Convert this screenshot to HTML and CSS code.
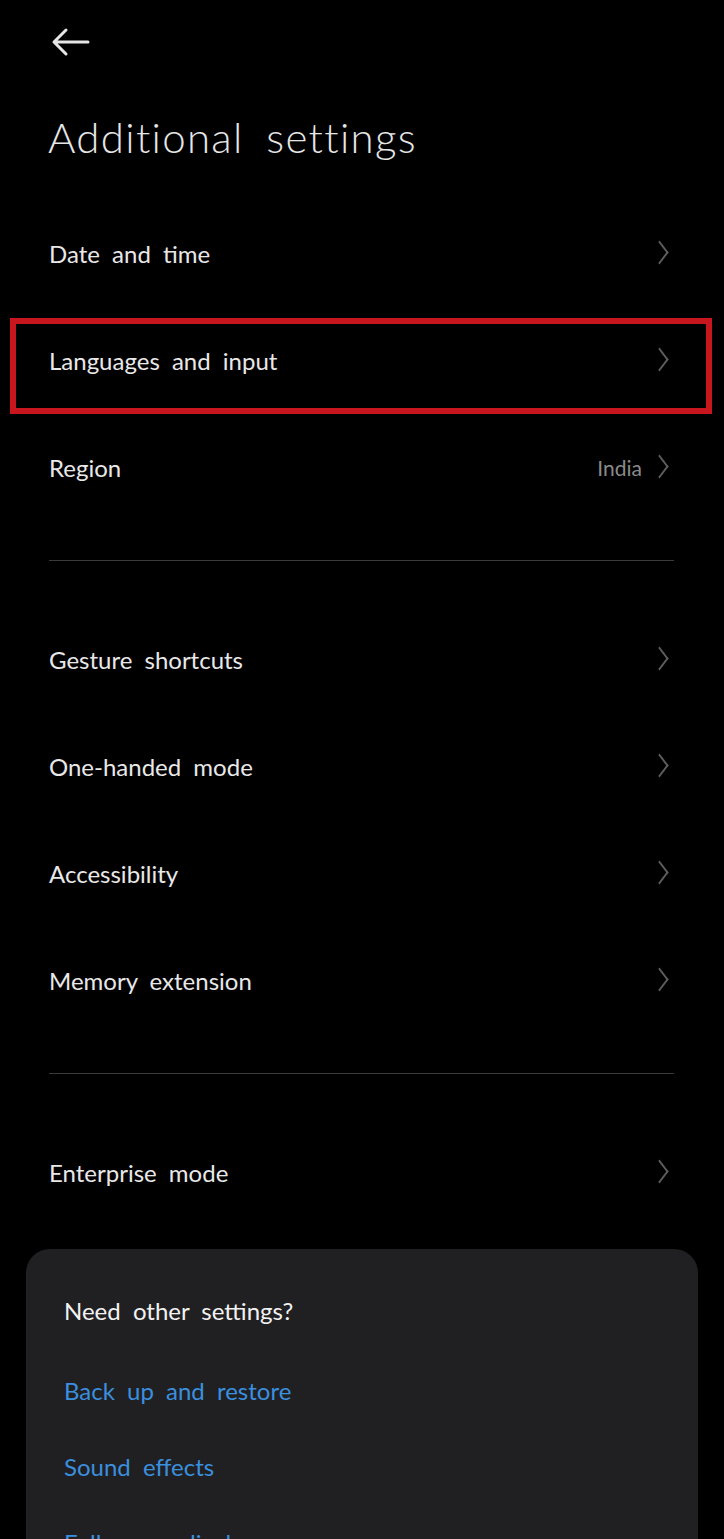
FILE: index.html
```html
<!DOCTYPE html>
<html>

<head>
    <meta name="viewport" content="width=device-width, initial-scale=1">
    <meta charset="utf-8">
    <link rel="stylesheet" href="styles.css">
</head>

<body>

    <div class="top">
        <svg class="back" width="40" height="30" viewBox="0 0 40 30">
            <path d="M38 15H4M16 3L4 15l12 12" fill="none" stroke="#e6e6e6" stroke-width="3" stroke-linecap="round" stroke-linejoin="round"/>
        </svg>
    </div>

    <h1 class="title">Additional settings</h1>

    <div class="list">
        <div class="row">
            <span class="label">Date and time</span>
            <span class="chev"></span>
        </div>
        <div class="row marked">
            <span class="label">Languages and input</span>
            <span class="chev"></span>
        </div>
        <div class="row">
            <span class="label">Region</span>
            <span class="value">India</span>
            <span class="chev"></span>
        </div>

        <div class="divider"></div>

        <div class="row">
            <span class="label">Gesture shortcuts</span>
            <span class="chev"></span>
        </div>
        <div class="row">
            <span class="label">One-handed mode</span>
            <span class="chev"></span>
        </div>
        <div class="row">
            <span class="label">Accessibility</span>
            <span class="chev"></span>
        </div>
        <div class="row">
            <span class="label">Memory extension</span>
            <span class="chev"></span>
        </div>

        <div class="divider"></div>

        <div class="row">
            <span class="label">Enterprise mode</span>
            <span class="chev"></span>
        </div>
    </div>

    <div class="card">
        <div class="card-head">Need other settings?</div>
        <a class="link" href="#">Back up and restore</a>
        <a class="link" href="#">Sound effects</a>
        <a class="link" href="#">Fullscreen display</a>
    </div>

</body>

</html>
```

FILE: styles.css
```css
* {
    box-sizing: border-box;
}

body {
    margin: 0;
    background: #000;
    color: #e8e8e8;
    font-family: Lato, "Liberation Sans", sans-serif;
    font-weight: 400;
    overflow: hidden;
}

.top {
    padding: 27px 0 0 50px;
    height: 58px;
}

.back {
    display: block;
}

.title {
    margin: 54px 0 0 48px;
    font-size: 42px;
    line-height: 50px;
    font-weight: 300;
    word-spacing: 10px;
    letter-spacing: 1.3px;
    color: #e6e6e6;
}

.list {
    margin-top: 38px;
}

.row {
    position: relative;
    display: flex;
    align-items: center;
    height: 107px;
    padding: 0 52px 0 49px;
    font-size: 24px;
    word-spacing: 6px;
}

.label {
    flex: 1;
}

.value {
    color: #8a8a8a;
    font-size: 21px;
    margin-right: 16px;
}

.chev {
    width: 14px;
    height: 26px;
    position: relative;
}

.chev::before {
    content: "";
    position: absolute;
    top: 4px;
    right: 5px;
    width: 13px;
    height: 13px;
    border-top: 2px solid #5e5e5e;
    border-right: 2px solid #5e5e5e;
    transform: rotate(45deg) skew(8deg, 8deg);
}

.marked::after {
    content: "";
    position: absolute;
    top: 11px;
    bottom: 0;
    left: 10px;
    right: 12px;
    border: 6px solid #c8161f;
}

.divider {
    height: 1px;
    background: #3a3a3a;
    margin: 39px 50px 45px 49px;
}

.card {
    margin: 23px 26px 0;
    padding-top: 24px;
    background: #202022;
    border-radius: 24px 24px 0 0;
    height: 400px;
}

.card-head {
    padding-left: 38px;
    font-size: 24px;
    line-height: 76px;
    word-spacing: 6px;
    color: #f2f2f2;
    margin-bottom: 4px;
}

.link {
    display: block;
    padding-left: 38px;
    font-size: 24px;
    line-height: 76px;
    word-spacing: 6px;
    color: #3b8fdf;
    text-decoration: none;
}
```
